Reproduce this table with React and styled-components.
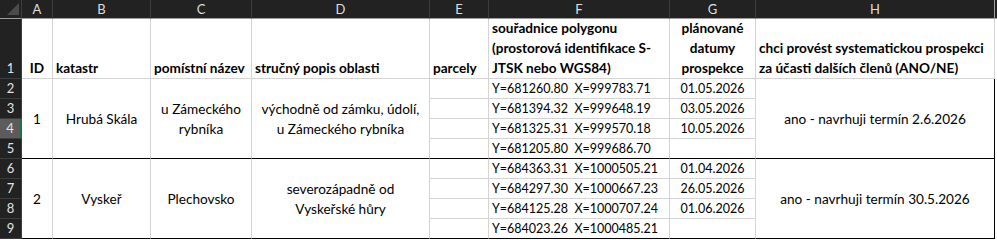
import styled, { createGlobalStyle } from "styled-components";

const GlobalStyle = createGlobalStyle`
  html, body {
    margin: 0;
    padding: 0;
    background: #ffffff;
  }
  body {
    font-family: Lato, "Liberation Sans", "Noto Sans", sans-serif;
  }
`;

const GRID = "#d4d4d4";
const HEAD_BG = "#222222";
const HEAD_LINE = "#3c3c3c";

const Sheet = styled.div`
  display: grid;
  grid-template-columns: 22px 31px 98px 101px 178px 59px 181px 86px 239px 2px;
  grid-template-rows: 19px 60px repeat(8, 20px);
  width: 997px;
  height: 240px;
  overflow: hidden;
`;

const Corner = styled.div`
  grid-column: 1;
  grid-row: 1;
  position: relative;
  background: ${HEAD_BG};
  border-right: 1px solid ${HEAD_LINE};
  border-bottom: 1px solid #9e9e9e;
  box-sizing: border-box;
`;

const CornerTriangle = styled.div`
  position: absolute;
  right: 2px;
  bottom: 3px;
  width: 0;
  height: 0;
  border-left: 12px solid transparent;
  border-bottom: 12px solid #4b4b4b;
`;

const ColHead = styled.div`
  grid-row: 1;
  grid-column: ${(p) => p.$col};
  display: flex;
  align-items: center;
  justify-content: center;
  background: ${HEAD_BG};
  color: #dedede;
  font-size: 13px;
  border-right: 1px solid ${(p) => (p.$edge ? "#9e9e9e" : HEAD_LINE)};
  border-bottom: 1px solid #9e9e9e;
  box-sizing: border-box;
`;

const RowHead = styled.div`
  grid-column: 1;
  grid-row: ${(p) => p.$row};
  display: flex;
  align-items: flex-end;
  justify-content: center;
  padding-bottom: 1px;
  background: ${(p) => (p.$active ? "#5c5c5c" : HEAD_BG)};
  color: #e2e2e2;
  font-size: 13px;
  line-height: 18px;
  border-bottom: 1px solid ${HEAD_LINE};
  border-right: ${(p) => (p.$active ? "2px solid #1e7145" : `1px solid ${HEAD_LINE}`)};
  box-sizing: border-box;
`;

const Cell = styled.div`
  grid-column: ${(p) => p.$col};
  grid-row: ${(p) => p.$row};
  display: flex;
  flex-direction: column;
  justify-content: ${(p) => (p.$head ? "flex-end" : "center")};
  align-items: ${(p) =>
    p.$align === "left" ? "flex-start" : p.$align === "right" ? "flex-end" : "center"};
  text-align: ${(p) => p.$align || "center"};
  padding: 0 3px;
  font-size: ${(p) => (p.$numeric ? "12.5px" : "13.6px")};
  line-height: 20px;
  font-weight: ${(p) => (p.$head ? 700 : 400)};
  color: #000000;
  white-space: pre;
  background: #ffffff;
  border-right: 1px solid ${(p) => (p.$edgeRight ? "#000000" : GRID)};
  border-bottom: 1px solid ${(p) => (p.$groupEnd ? "#000000" : GRID)};
  box-sizing: border-box;
  overflow: visible;
`;

const Filler = styled.div`
  grid-column: 10;
  grid-row: ${(p) => p.$row};
  background: ${(p) => (p.$dark ? HEAD_BG : "#ffffff")};
  border-bottom: ${(p) => (p.$dark ? "1px solid #9e9e9e" : "none")};
  box-sizing: border-box;
`;

const columns = ["A", "B", "C", "D", "E", "F", "G", "H"];

const groups = [
  {
    start: 2,
    id: "1",
    katastr: "Hrubá Skála",
    nazev: ["u Zámeckého", "rybníka"],
    popis: ["východně od zámku, údolí,", "u Zámeckého rybníka"],
    coords: [
      "Y=681260.80  X=999783.71",
      "Y=681394.32  X=999648.19",
      "Y=681325.31  X=999570.18",
      "Y=681205.80  X=999686.70",
    ],
    dates: ["01.05.2026", "03.05.2026", "10.05.2026", ""],
    answer: "ano - navrhuji termín 2.6.2026",
  },
  {
    start: 6,
    id: "2",
    katastr: "Vyskeř",
    nazev: ["Plechovsko"],
    popis: ["severozápadně od", "Vyskeřské hůry"],
    coords: [
      "Y=684363.31  X=1000505.21",
      "Y=684297.30  X=1000667.23",
      "Y=684125.28  X=1000707.24",
      "Y=684023.26  X=1000485.21",
    ],
    dates: ["01.04.2026", "26.05.2026", "01.06.2026", ""],
    answer: "ano - navrhuji termín 30.5.2026",
  },
];

const Lines = ({ items }) =>
  items.map((t, i) => <span key={i}>{t}</span>);

const Group = ({ g }) => {
  const span = `${g.start + 1} / span 4`;
  return (
    <>
      <Cell $col={2} $row={span} $groupEnd>{g.id}</Cell>
      <Cell $col={3} $row={span} $groupEnd>{g.katastr}</Cell>
      <Cell $col={4} $row={span} $groupEnd>
        <Lines items={g.nazev} />
      </Cell>
      <Cell $col={5} $row={span} $groupEnd>
        <Lines items={g.popis} />
      </Cell>
      {g.coords.map((c, i) => (
        <Cell key={`e${i}`} $col={6} $row={g.start + 1 + i} $groupEnd={i === 3} />
      ))}
      {g.coords.map((c, i) => (
        <Cell
          key={`f${i}`}
          $col={7}
          $row={g.start + 1 + i}
          $align="left"
          $numeric
          $groupEnd={i === 3}
        >
          {c}
        </Cell>
      ))}
      {g.dates.map((d, i) => (
        <Cell
          key={`g${i}`}
          $col={8}
          $row={g.start + 1 + i}
          $numeric
          $groupEnd={i === 3}
        >
          {d}
        </Cell>
      ))}
      <Cell $col={9} $row={span} $groupEnd $edgeRight>
        {g.answer}
      </Cell>
    </>
  );
};

const App = () => {
  return (
    <>
      <GlobalStyle />
      <Sheet>
        <Corner>
          <CornerTriangle />
        </Corner>
        {columns.map((c, i) => (
          <ColHead key={c} $col={i + 2} $edge={c === "H"}>
            {c}
          </ColHead>
        ))}
        <Filler $row={1} $dark />
        {[1, 2, 3, 4, 5, 6, 7, 8, 9].map((n) => (
          <RowHead key={n} $row={n + 1} $active={n === 4}>
            {n}
          </RowHead>
        ))}
        <Filler $row="2 / span 9" />

        <Cell $col={2} $row={2} $head>ID</Cell>
        <Cell $col={3} $row={2} $head $align="left">katastr</Cell>
        <Cell $col={4} $row={2} $head $align="left">pomístní název</Cell>
        <Cell $col={5} $row={2} $head $align="left">stručný popis oblasti</Cell>
        <Cell $col={6} $row={2} $head $align="left">parcely</Cell>
        <Cell $col={7} $row={2} $head $align="left">
          <Lines
            items={[
              "souřadnice polygonu",
              "(prostorová identifikace S-",
              "JTSK nebo WGS84)",
            ]}
          />
        </Cell>
        <Cell $col={8} $row={2} $head>
          <Lines items={["plánované", "datumy", "prospekce"]} />
        </Cell>
        <Cell $col={9} $row={2} $head $align="left">
          <Lines
            items={[
              "chci provést systematickou prospekci",
              "za účasti dalších členů (ANO/NE)",
            ]}
          />
        </Cell>

        {groups.map((g) => (
          <Group key={g.id} g={g} />
        ))}
      </Sheet>
    </>
  );
};

export default App;
